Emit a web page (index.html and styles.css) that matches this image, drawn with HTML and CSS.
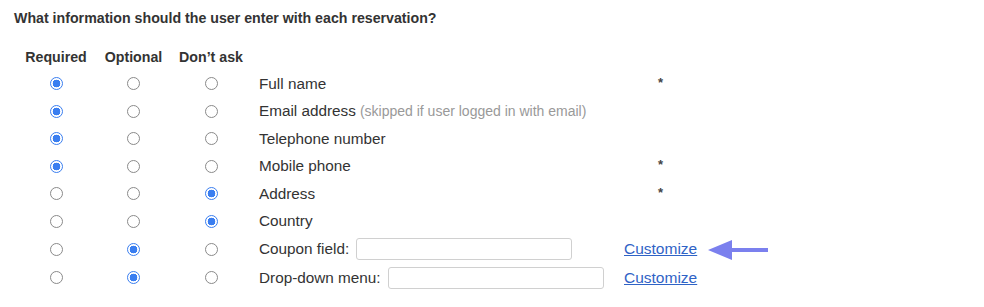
FILE: index.html
```html
<!DOCTYPE html>
<html>
<head>
<meta charset="utf-8">
<link rel="stylesheet" href="styles.css">
</head>
<body>
<div class="page">
  <h3 class="title">What information should the user enter with each reservation?</h3>
  <div class="fields">
    <div class="hd">Required</div><div class="hd">Optional</div><div class="hd">Don’t ask</div><div></div><div></div>

    <div class="rc"><input type="radio" name="r1" checked></div><div class="rc"><input type="radio" name="r1"></div><div class="rc"><input type="radio" name="r1"></div>
    <div class="lbl">Full name</div><div class="ex"><span class="ast">*</span></div>

    <div class="rc"><input type="radio" name="r2" checked></div><div class="rc"><input type="radio" name="r2"></div><div class="rc"><input type="radio" name="r2"></div>
    <div class="lbl">Email address <span class="note">(skipped if user logged in with email)</span></div><div class="ex"></div>

    <div class="rc"><input type="radio" name="r3" checked></div><div class="rc"><input type="radio" name="r3"></div><div class="rc"><input type="radio" name="r3"></div>
    <div class="lbl">Telephone number</div><div class="ex"></div>

    <div class="rc"><input type="radio" name="r4" checked></div><div class="rc"><input type="radio" name="r4"></div><div class="rc"><input type="radio" name="r4"></div>
    <div class="lbl">Mobile phone</div><div class="ex"><span class="ast">*</span></div>

    <div class="rc"><input type="radio" name="r5"></div><div class="rc"><input type="radio" name="r5"></div><div class="rc"><input type="radio" name="r5" checked></div>
    <div class="lbl">Address</div><div class="ex"><span class="ast">*</span></div>

    <div class="rc"><input type="radio" name="r6"></div><div class="rc"><input type="radio" name="r6"></div><div class="rc"><input type="radio" name="r6" checked></div>
    <div class="lbl">Country</div><div class="ex"></div>

    <div class="rc"><input type="radio" name="r7"></div><div class="rc"><input type="radio" name="r7" checked></div><div class="rc"><input type="radio" name="r7"></div>
    <div class="lbl">Coupon field: <input class="txt" type="text"></div>
    <div class="ex link-cell"><a href="#">Customize</a>
      <svg class="arrow" width="62" height="24" viewBox="0 0 62 24"><path d="M1 12 L25 2 L25 10 L61 10 L61 14 L25 14 L25 22 Z" fill="#7b80ee"/></svg>
    </div>

    <div class="rc"><input type="radio" name="r8"></div><div class="rc"><input type="radio" name="r8" checked></div><div class="rc"><input type="radio" name="r8"></div>
    <div class="lbl">Drop-down menu: <input class="txt" type="text"></div>
    <div class="ex link-cell"><a href="#">Customize</a></div>
  </div>
</div>
</body>
</html>
```

FILE: styles.css
```css
html, body {
  margin: 0;
  padding: 0;
  background: #fff;
}
body {
  font-family: "Liberation Sans", Arial, sans-serif;
  color: #333;
}
.page {
  padding: 9px 0 0 14px;
}
.title {
  margin: 0;
  font-size: 14.2px;
  line-height: 18px;
  font-weight: bold;
  color: #333;
}
.fields {
  margin: 17px 0 0 3px;
  display: grid;
  grid-template-columns: 78px 77px 78px 374px 73px;
  grid-template-rows: 26px repeat(6, 27.5px) 28px 29px;
  align-items: center;
}
.hd {
  text-align: center;
  font-weight: bold;
  font-size: 14.2px;
  color: #333;
}
.rc {
  display: flex;
  justify-content: center;
  align-items: center;
}
.rc input {
  appearance: none;
  -webkit-appearance: none;
  margin: 0;
  width: 13px;
  height: 13px;
  border: 1px solid #8a8a8a;
  border-radius: 50%;
  background: #fff;
  box-sizing: border-box;
}
.rc input:checked {
  border: 1.5px solid #3a7ef0;
  background: radial-gradient(circle, #3a7ef0 0 3.6px, #fff 4.1px);
}
.lbl {
  padding-left: 9px;
  font-size: 15.3px;
  color: #333;
  white-space: nowrap;
  display: flex;
  align-items: center;
}
.note {
  font-size: 14px;
  color: #999;
  margin-left: 4px;
}
.txt {
  margin: 0 0 0 7px;
  width: 216px;
  height: 22px;
  box-sizing: border-box;
  border: 1px solid #d0d0d0;
  border-radius: 3px;
  background: #fff;
  font: inherit;
}
.ex {
  text-align: center;
  position: relative;
}
.ast {
  display: inline-block;
  font-size: 13px;
  font-weight: bold;
  color: #444;
  position: relative;
  top: -2px;
}
.link-cell {
  text-align: left;
}
.link-cell a {
  font-size: 15.5px;
  color: #2f63c6;
  text-decoration: underline;
}
.arrow {
  position: absolute;
  left: 83px;
  top: 50%;
  margin-top: -11px;
}
```
